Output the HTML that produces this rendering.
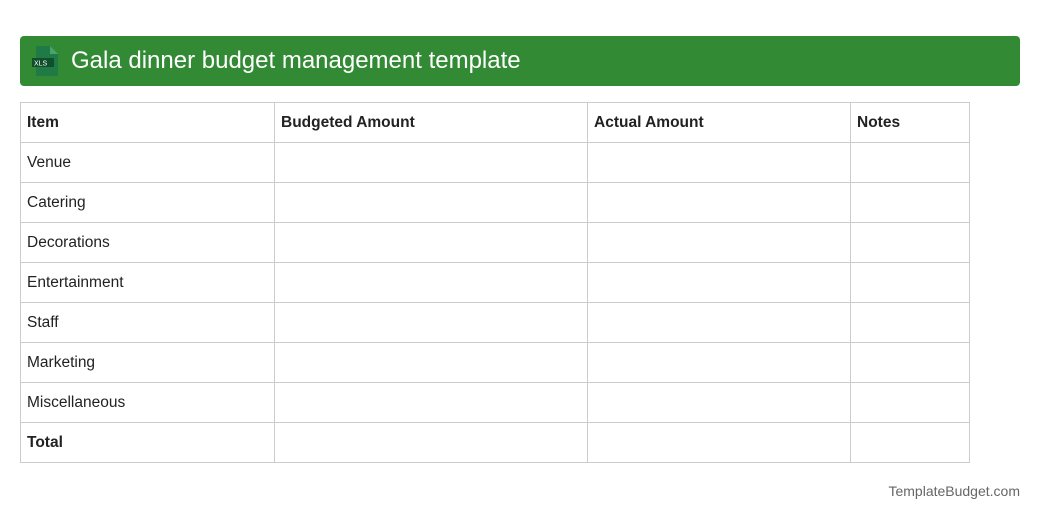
<!DOCTYPE html>
<html><head><meta charset="utf-8"><style>
body{margin:0;width:1040px;height:520px;background:#fff;font-family:"Liberation Sans",sans-serif;position:relative;overflow:hidden}
.hdr{position:absolute;left:20px;top:36px;width:1000px;height:50px;background:#328a35;border-radius:4px}
.hdr span{position:absolute;left:51px;top:11px;color:#fff;font-size:24px;line-height:28px}
table{position:absolute;left:20px;top:102px;border-collapse:collapse;font-size:15.5px;color:#222}
td{border:1px solid #ccc;height:40px;padding:0 0 0 6px;box-sizing:border-box}
tr.h td,tr.t td{font-weight:bold}
.f{position:absolute;right:20px;top:483px;font-size:14px;color:#666}
</style></head><body>
<div class="hdr">
<svg style="position:absolute;left:12px;top:10px" width="28" height="30" viewBox="0 0 28 30">
<path d="M4 0H18L26 8V30H4Z" fill="#1f7a45"/><path d="M18 0V8H26Z" fill="#4aa36a"/>
<rect x="0" y="12" width="22" height="9" fill="#0f4f2b"/>
<text x="2" y="19.5" font-size="7" fill="#fff" font-family="Liberation Sans">XLS</text></svg>
<span>Gala dinner budget management template</span></div>
<table>
<tr class="h"><td style="width:254px">Item</td><td style="width:313px">Budgeted Amount</td><td style="width:263px">Actual Amount</td><td style="width:119px">Notes</td></tr>
<tr><td>Venue</td><td></td><td></td><td></td></tr>
<tr><td>Catering</td><td></td><td></td><td></td></tr>
<tr><td>Decorations</td><td></td><td></td><td></td></tr>
<tr><td>Entertainment</td><td></td><td></td><td></td></tr>
<tr><td>Staff</td><td></td><td></td><td></td></tr>
<tr><td>Marketing</td><td></td><td></td><td></td></tr>
<tr><td>Miscellaneous</td><td></td><td></td><td></td></tr>
<tr class="t"><td>Total</td><td></td><td></td><td></td></tr>
</table>
<div class="f">TemplateBudget.com</div>
</body></html>
